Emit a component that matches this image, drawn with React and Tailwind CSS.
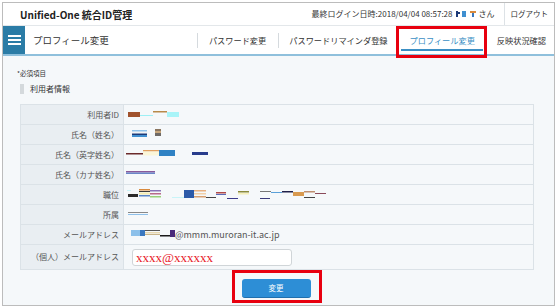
import React from 'react';

const font = "font-['Noto_Sans_CJK_JP','Noto_Sans',sans-serif]";

// redaction marks drawn as little coloured rects, one set per row
const marks = {
  id: [
    [4, 7, 12, 5, '#a0522d'],
    [16, 10, 13, 1, '#9ef0f5'],
    [29, 6, 14, 1.5, '#b88a4a'],
    [43, 7, 12, 5, '#a8f4f8'],
  ],
  name: [
    [8, 5, 15, 1.5, '#8fc2ea'],
    [8, 7, 15, 1, '#f2f2f2'],
    [8, 8.5, 15, 1.5, '#1c3a78'],
    [8, 10, 15, 2, '#3f8fd0'],
    [31, 4, 6, 2, '#8a7660'],
    [31, 6, 6, 2, '#c7a67c'],
    [31, 8, 6, 3, '#6e6a66'],
  ],
  en: [
    [2, 8, 17, 1.5, '#6b2a2a'],
    [19, 5, 16, 1.5, '#e0a060'],
    [19, 6.5, 16, 4, '#fbf6d8'],
    [35, 5, 16, 6, '#2f82c4'],
    [68, 7, 16, 3, '#283c8c'],
  ],
  kana: [
    [2, 6, 29, 1.5, '#8a5a9a'],
    [2, 7.5, 29, 1.5, '#6a86c8'],
  ],
  pos: [
    [3, 5, 4, 1, '#c8f4f8'],
    [4, 9, 10, 3, '#2a2a2a'],
    [15, 4, 11, 1.5, '#d98a3c'],
    [15, 6, 11, 1, '#3a3a3a'],
    [15, 7.5, 11, 2, '#f4ecb0'],
    [15, 10, 11, 1.5, '#5a86c8'],
    [26, 5, 11, 1.5, '#8a74b8'],
    [26, 8, 11, 1.5, '#b86a8a'],
    [26, 11, 11, 1.5, '#9ad07a'],
    [48, 12, 12, 1, '#c8f4f8'],
    [60, 5, 10, 8, '#2c5aa8'],
    [70, 5, 12, 1.5, '#e8b080'],
    [70, 8, 12, 1.5, '#f2d0a8'],
    [70, 11, 12, 1.5, '#d8a070'],
    [82, 12, 10, 1, '#444'],
    [92, 7, 10, 1.5, '#b04a4a'],
    [92, 9, 10, 1, '#5a6ab8'],
    [103, 13, 11, 1, '#3a3a8a'],
    [114, 6, 11, 1.5, '#8a8a3a'],
    [114, 8, 11, 1.5, '#f6f0b8'],
    [136, 6, 11, 1, '#777'],
    [136, 13, 10, 1, '#3a3a7a'],
    [147, 7, 11, 1, '#5aa0d8'],
    [158, 6, 11, 1.5, '#20204a'],
    [169, 7, 11, 4, '#d89a50'],
    [180, 6, 11, 1.5, '#c09070'],
    [180, 12, 11, 1, '#444'],
    [191, 8, 11, 1, '#8a4a5a'],
  ],
  dept: [
    [4, 7, 20, 1, '#888'],
    [4, 9, 20, 1, '#8ec0ea'],
  ],
  mail: [
    [0, 5, 9, 6, '#8cc0ea'],
    [9, 5, 5, 6, '#3a78c0'],
    [14, 5, 15, 1, '#555'],
    [14, 7, 15, 1.5, '#e8d8b0'],
    [14, 9, 15, 1, '#c8b48a'],
    [29, 10, 10, 1.5, '#1a1a1a'],
    [39, 5, 5, 7, '#4a2a7a'],
  ],
};

const Marks = ({ set, w, h = 19 }) => (
  <svg width={w} height={h} className="block shrink-0">
    {marks[set].map(([x, y, mw, mh, c], i) => (
      <rect key={i} x={x} y={y} width={mw} height={mh} fill={c} />
    ))}
  </svg>
);

const Row = ({ label, children, tall }) => (
  <div className={`grid grid-cols-[103px_1fr] border-t border-[#dbe2e7] ${tall ? 'h-[25px]' : 'h-[20px]'}`}>
    <div className="bg-[#e9eef2] border-r border-[#dbe2e7] flex items-center justify-end pr-[4px] text-[8px] text-[#555]">
      {label}
    </div>
    <div className="flex items-center bg-[#f5f8fa]">{children}</div>
  </div>
);

export default function App() {
  return (
    <div className={`w-[557px] h-[307px] bg-white p-[2px] overflow-hidden ${font}`}>
      <div className="relative h-[304px] w-[553px] border border-[#bcbcbc] flex flex-col">
        {/* top bar */}
        <div className="h-[23px] flex items-center border-b border-[#e3e7ea] bg-white">
          <div className="pl-[17px] text-[10px] font-bold text-[#222]">Unified-One 統合ID管理</div>
          <div className="ml-auto flex items-center h-full text-[8px] text-[#333]">
            <span>最終ログイン日時:2018/04/04 08:57:28</span>
            <svg width="22" height="8" className="mx-[2px]">
              <rect x="1" y="1" width="2" height="6" fill="#1c3a78" />
              <rect x="3" y="2" width="2" height="2" fill="#1c3a78" />
              <rect x="7" y="1" width="4" height="6" fill="#3f8fd0" />
              <rect x="15" y="1" width="6" height="2" fill="#d98a3c" />
              <rect x="17" y="3" width="2" height="4" fill="#3a78c0" />
            </svg>
            <span className="pr-[9px]">さん</span>
            <div className="h-full border-l border-[#dde2e6] flex items-center px-[6px] text-[7.5px]">ログアウト</div>
          </div>
        </div>

        {/* nav bar */}
        <div className="h-[30px] flex items-stretch bg-white border-b-2 border-[#8fc0dc]">
          <div className="w-[22px] bg-[#2b7ca6] flex flex-col items-center justify-center gap-[2px]">
            <span className="block w-[13px] h-[2px] bg-white" />
            <span className="block w-[13px] h-[2px] bg-white" />
            <span className="block w-[13px] h-[2px] bg-white" />
          </div>
          <div className="pl-[8px] flex items-center text-[9.5px] text-[#333]">プロフィール変更</div>
          <div className="ml-auto flex items-center text-[8.2px] text-[#333] pr-[8px]">
            <div className="flex items-center h-[15px] border-l border-[#d5dade] pl-[11px] pr-[12px]">パスワード変更</div>
            <div className="flex items-center h-[15px] border-l border-[#d5dade] pl-[10px] pr-[11px]">パスワードリマインダ登録</div>
            <div className="relative flex items-center h-full px-[11px] text-[#3b8fc4]">
              プロフィール変更
              <span className="absolute left-[2px] right-[3px] bottom-[3px] h-[2px] bg-[#3b8fc4]" />
            </div>
            <div className="flex items-center h-full pl-[11px]">反映状況確認</div>
          </div>
        </div>

        {/* content */}
        <div className="flex-1 bg-[#f5f8fa] pl-[14px] pr-[19px]">
          <div className="pt-[12px] text-[6.5px] text-[#333] leading-[10px]">*必須項目</div>
          <div className="flex items-center mt-[5px] ml-[3px] h-[11px]">
            <span className="block w-[4px] h-[10px] bg-[#d4d9dc]" />
            <span className="ml-[6px] text-[8px] text-[#333]">利用者情報</span>
          </div>
          <div className="ml-[3px] mt-[10px] w-[514px] border-x border-b border-[#dbe2e7]">
            <Row label="利用者ID"><Marks set="id" w={60} /></Row>
            <Row label="氏名（姓名）"><Marks set="name" w={40} /></Row>
            <Row label="氏名（英字姓名）"><Marks set="en" w={90} /></Row>
            <Row label="氏名（カナ姓名）"><Marks set="kana" w={40} /></Row>
            <Row label="職位"><Marks set="pos" w={205} /></Row>
            <Row label="所属"><Marks set="dept" w={30} /></Row>
            <Row label="メールアドレス">
              <span className="w-[7px]" />
              <Marks set="mail" w={44} />
              <span className="text-[9px] text-[#555]">@mmm.muroran-it.ac.jp</span>
            </Row>
            <Row label="（個人）メールアドレス" tall>
              <div className="ml-[8px] w-[160px] h-[17px] bg-white border border-[#d0d5d8] rounded-[3px] flex items-center pl-[3px]">
                <span className="font-['Liberation_Serif',serif] text-[13px] leading-none text-[#e8202a]">xxxx@xxxxxx</span>
              </div>
            </Row>
          </div>
          <div className="flex justify-center mt-[9px]">
            <button className="w-[69px] h-[19px] rounded-[3px] bg-[#2d8ed6] border-b border-[#1f6fae] text-white text-[7.5px]">
              変更
            </button>
          </div>
        </div>

        {/* annotation boxes */}
        <div className="absolute left-[393px] top-[23px] w-[91px] h-[32px] border-[3px] border-[#e8000f] pointer-events-none" />
        <div className="absolute left-[229px] top-[267px] w-[90px] h-[33px] border-[3px] border-[#e8000f] pointer-events-none" />
      </div>
    </div>
  );
}
